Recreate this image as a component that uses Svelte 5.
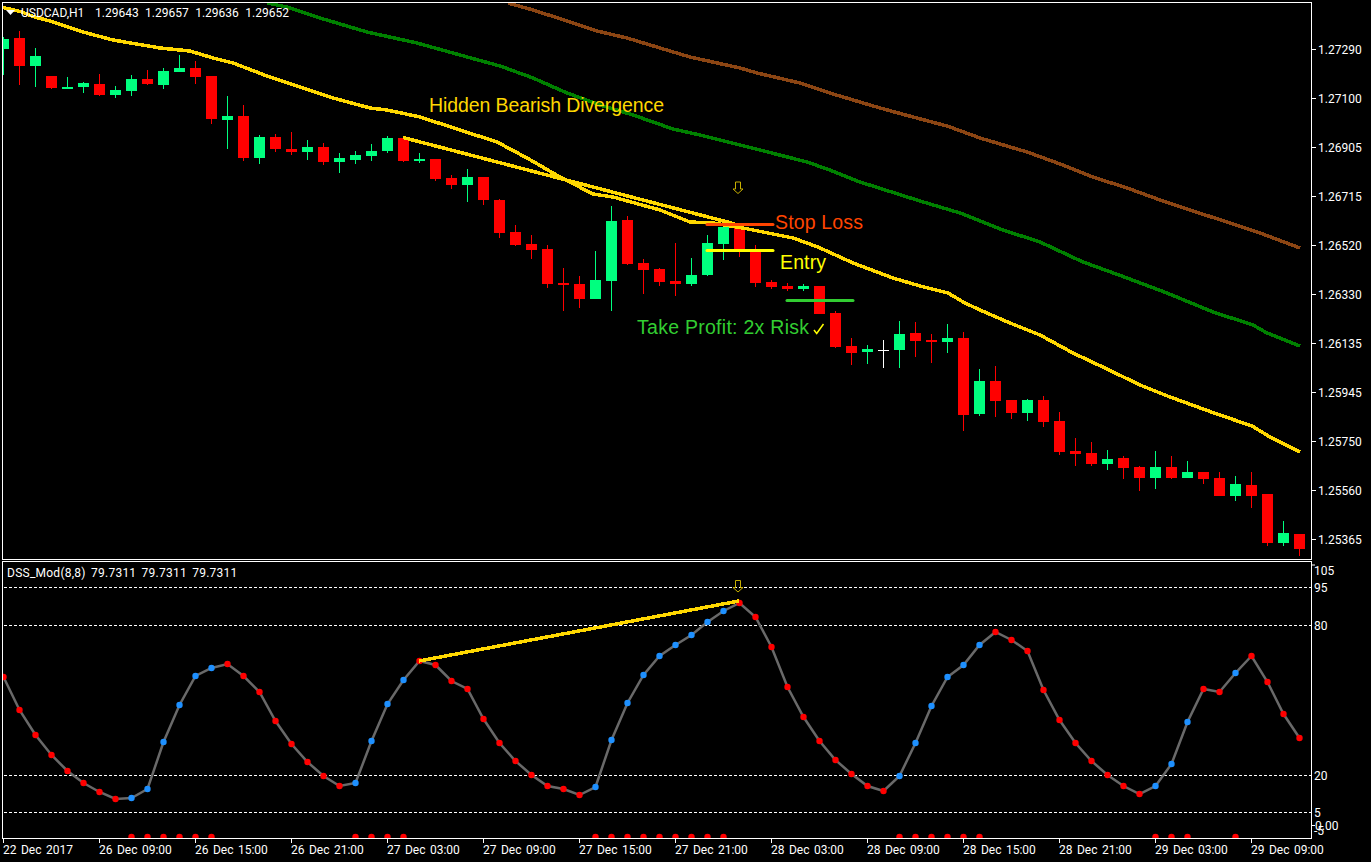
<script>
  // [type, high, bodyTop, bodyBottom, low] in screen y, one candle every 16px
  const candles = [
    ['g',37,39,49,75],['r',31,38,66,85],['g',48,56,66,87],['r',76,76,88,89],['g',77,87,89,89],['g',82,83,87,93],
    ['r',74,84,95,96],['g',86,90,95,98],['g',75,79,91,96],['r',70,79,84,85],['g',68,71,85,89],['g',55,68,72,72],
    ['r',61,68,77,84],['r',76,76,119,124],['g',96,116,120,149],['r',105,116,158,161],['g',135,137,158,164],['r',134,137,149,152],
    ['r',132,149,152,155],['g',140,147,152,160],['r',143,147,162,165],['g',153,158,162,173],['g',151,155,160,164],['g',144,151,156,161],
    ['g',136,138,151,153],['r',138,138,161,162],['g',153,159,161,163],['r',159,159,179,181],['r',175,178,185,189],['g',169,177,185,202],
    ['r',177,177,200,205],['r',199,200,233,238],['r',225,232,245,246],['r',235,244,250,259],['r',245,249,284,288],['r',268,283,285,311],
    ['r',276,284,299,308],['g',251,280,299,299],['g',206,221,281,311],['r',216,220,264,265],['r',259,263,270,294],['r',268,269,282,286],
    ['r',243,281,284,296],['g',258,275,284,286],['g',235,243,275,276],['g',226,227,244,260],['r',225,227,250,257],['r',245,250,283,287],
    ['r',280,282,287,289],['r',283,286,289,291],['g',284,286,289,291],['r',286,286,314,314],['r',311,313,347,348],['r',338,346,353,365],
    ['g',345,349,352,364],['w',340,350,351,368],['g',321,334,350,368],['r',322,333,341,357],['r',334,340,342,363],['g',324,338,342,353],
    ['r',332,338,415,431],['g',369,381,414,416],['r',366,381,401,417],['r',400,400,413,419],['g',399,400,413,421],['r',396,400,422,427],
    ['r',412,421,452,455],['r',438,451,454,466],['r',442,453,464,466],['g',450,459,464,470],['r',456,458,468,479],['r',466,467,478,491],
    ['g',451,467,478,489],['r',456,467,478,479],['g',461,472,478,478],['r',472,472,479,484],['r',472,478,496,496],['g',476,484,496,501],
    ['r',472,485,496,508],['r',494,494,543,546],['g',521,533,543,546],['r',534,534,549,556]
  ];
  const candleX = (i) => 3 + 16 * i;

  const gold = '3,7.5 22,12 33,16.5 50,21 83,32 113,40 160,48 190,51 213,58 233,63 267,76 300,87 333,98 370,108 387,110 420,117 460,130 497,142 527,158 560,177 593,194 613,197 660,210 690,222 713,223 743,228 793,238 818,247 853,263 893,278 920,286 948,293 965,303 980,310 1010,323 1040,335 1073,353 1107,369 1140,385 1170,397 1217,414 1252,426 1270,437 1300,452';
  const green = '267,3 287,7 320,18 367,32 417,43 460,55 500,66 533,78 567,93 600,105 633,115 673,129 700,135 760,150 807,162 827,169 860,182 920,201 960,213 1003,230 1040,242 1083,262 1127,278 1167,293 1213,312 1253,325 1267,333 1300,346';
  const brown = '508,3 533,10 567,21 597,31 627,38 660,48 690,57 740,68 757,73 800,83 833,94 880,108 913,117 947,126 980,138 1027,152 1060,164 1093,177 1130,189 1160,200 1193,211 1227,222 1260,233 1300,248';

  // DSS value per candle, r = falling, b = rising
  const dss = [
    ['r',677],['r',710],['r',735],['r',755],['r',771],['r',783],['r',792],['r',799],['b',798],['b',789],['b',742],['b',705],
    ['b',676],['b',668],['r',664],['r',676],['r',692],['r',721],['r',744],['r',762],['r',776],['r',786],['b',783],['b',741],
    ['b',704],['b',680],['r',661],['r',665],['r',681],['r',689],['r',719],['r',743],['r',761],['r',775],['r',786],['r',789],
    ['r',795],['b',787],['b',740],['b',703],['b',675],['b',656],['b',645],['b',635],['b',622],['b',611],['r',603],['r',617],
    ['r',647],['r',687],['r',717],['r',741],['r',760],['r',774],['r',786],['r',791],['b',776],['b',743],['b',706],['b',677],
    ['b',665],['b',645],['r',632],['r',640],['r',651],['r',690],['r',720],['r',743],['r',761],['r',775],['r',786],['r',794],
    ['b',786],['b',764],['b',722],['r',689],['r',692],['b',673],['r',656],['r',682],['r',714],['r',738]
  ];
  const dssLine = dss.map(([, y], i) => `${candleX(i) + 0.5},${y}`).join(' ');

  const prices = [
    ['1.27290',49],['1.27100',98],['1.26905',147],['1.26715',196],['1.26520',245],['1.26330',294],
    ['1.26135',343],['1.25945',392],['1.25750',441],['1.25560',490],['1.25365',539]
  ];
  const levels = [587.5, 625.5, 775.5, 812.5];
  const levelLabels = [['105',575],['95',592],['80',630],['20',780],['5',817],['0.00',830],['-5',835]];

  const times = ['22 Dec 2017','26 Dec 09:00','26 Dec 15:00','26 Dec 21:00','27 Dec 03:00','27 Dec 09:00','27 Dec 15:00',
    '27 Dec 21:00','28 Dec 03:00','28 Dec 09:00','28 Dec 15:00','28 Dec 21:00','29 Dec 03:00','29 Dec 09:00'];
</script>

<div class="terminal">
  <section class="pane">
    <svg width="1371" height="560" viewBox="0 0 1371 560">
      <defs>
        <clipPath id="plot"><rect x="3" y="3" width="1308" height="556" /></clipPath>
      </defs>
      <g clip-path="url(#plot)">
        <polyline class="ma" points={brown} stroke="#8b4513" />
        <polyline class="ma" points={green} stroke="#008000" />
        {#each candles as [kind, high, top, bottom, low], i}
          <g class={kind}>
            <rect x={candleX(i)} y={high} width="1" height={low - high} />
            <rect x={candleX(i) - 5} y={top} width="11" height={Math.max(bottom - top, 1)} />
          </g>
        {/each}
        <polyline class="ma" points={gold} stroke="#ffd700" />
        <line class="ma" x1="403" y1="137.5" x2="735" y2="224" stroke="#ffd700" />
        <line class="level-mark" x1="707" y1="224.5" x2="773" y2="224.5" stroke="#ff4500" />
        <line class="level-mark" x1="707" y1="250.5" x2="773" y2="250.5" stroke="#ffff00" />
        <line class="level-mark" x1="787" y1="300.5" x2="853" y2="300.5" stroke="#32cd32" />
      </g>

      <polygon class="arrow" points="735.5,182 740.5,182 740.5,189 743,189 738,193.5 733,189 735.5,189" />
      <path class="check" d="M814 330 L816.7 333.5 L823.5 324" />

      <text class="note" x="429" y="112" fill="#ffd700" textLength="235">Hidden Bearish Divergence</text>
      <text class="note" x="775" y="229" fill="#ff4500" textLength="88">Stop Loss</text>
      <text class="note" x="780" y="269" fill="#ffff00" textLength="46">Entry</text>
      <text class="note" x="637" y="334" fill="#32cd32" textLength="172">Take Profit: 2x Risk</text>

      <polygon class="flag" points="6,10 15,10 10.5,15" />
      <text class="tick" x="21" y="17">USDCAD,H1</text>
      <text class="tick legend" x="95" y="17">1.29643 1.29657 1.29636 1.29652</text>

      {#each prices as [label, y]}
        <line class="rule" x1="1312" y1={y + 0.5} x2="1316" y2={y + 0.5} />
        <text class="tick" x="1318" y={y + 4.5}>{label}</text>
      {/each}

      <rect class="frame" x="2.5" y="2.5" width="1309" height="557" />
    </svg>
  </section>

  <section class="pane">
    <svg width="1371" height="279" viewBox="0 560 1371 279">
      <defs>
        <clipPath id="sub"><rect x="3" y="562" width="1308" height="276" /></clipPath>
      </defs>
      {#each levels as y}
        <line class="dotted" x1="4" y1={y} x2="1311" y2={y} />
      {/each}
      <g clip-path="url(#sub)">
        <polyline class="dss-line" points={dssLine} />
        {#each dss as [kind, y], i}
          <circle class={kind === 'r' ? 'dot-r' : 'dot-b'} cx={candleX(i) + 0.5} cy={y} r="3.2" />
          {#if kind === 'b'}
            <circle class="dot-r" cx={candleX(i) + 0.5} cy="837" r="3.2" />
          {/if}
        {/each}
        <line class="ma" x1="419" y1="661" x2="739" y2="601" stroke="#ffd700" />
      </g>
      <polygon class="arrow" points="735.5,580.5 740.5,580.5 740.5,587.5 743,587.5 738,592 733,587.5 735.5,587.5" />
      <text class="tick dss-label" x="7" y="577">DSS_Mod(8,8) 79.7311 79.7311 79.7311</text>

      <line class="rule" x1="1312" y1="565" x2="1315" y2="565" />
      <line class="rule" x1="1312" y1="825.5" x2="1315" y2="825.5" />
      {#each levelLabels as [label, y]}
        <text class="tick" x={label === '0.00' ? 1315 : 1314} y={y}>{label}</text>
      {/each}

      <rect class="frame" x="2.5" y="561.5" width="1309" height="277" />
    </svg>
  </section>

  <div class="time-axis">
    {#each times as label}
      <span class="time">{label}</span>
    {/each}
  </div>
</div>

<style>
  :global(body) {
    background: #000;
  }
  .terminal {
    width: 1371px;
    height: 862px;
    background: #000;
    overflow: hidden;
  }
  .pane svg {
    display: block;
  }
  .g { fill: #00ff7f; }
  .r { fill: #ff0000; }
  .w { fill: #ffffff; }
  .ma {
    fill: none;
    stroke-width: 3.5;
    stroke-linejoin: round;
    shape-rendering: crispEdges;
  }
  .level-mark {
    stroke-width: 3;
    stroke-linecap: round;
  }
  .frame {
    fill: none;
    stroke: #fff;
    stroke-width: 1;
  }
  .rule {
    stroke: #fff;
    stroke-width: 1;
  }
  .dotted {
    stroke: #fff;
    stroke-width: 1;
    stroke-dasharray: 3 2;
  }
  .dss-line {
    fill: none;
    stroke: #696969;
    stroke-width: 2.5;
  }
  .dot-r { fill: #ff0000; }
  .dot-b { fill: #1e90ff; }
  .arrow {
    fill: none;
    stroke: #c8b000;
    stroke-width: 1;
  }
  .check {
    fill: none;
    stroke: #ffff00;
    stroke-width: 1.5;
  }
  .flag { fill: #fff; }
  .note {
    font-family: "Liberation Sans", Arial, sans-serif;
    font-size: 19.5px;
  }
  .tick {
    font-family: Roboto, "Liberation Sans", sans-serif;
    font-size: 12px;
    fill: #fff;
  }
  .legend {
    word-spacing: 3.5px;
  }
  .dss-label {
    letter-spacing: 0.25px;
    word-spacing: 2px;
  }
  .time-axis {
    display: grid;
    grid-template-columns: repeat(14, 96px);
    padding-left: 3px;
  }
  .time {
    position: relative;
    padding-top: 4px;
    font: 12px Roboto, "Liberation Sans", sans-serif;
    word-spacing: 1.5px;
    color: #fff;
    white-space: nowrap;
  }
  .time::before {
    content: "";
    position: absolute;
    left: 0;
    top: 0;
    width: 1px;
    height: 4px;
    background: #fff;
  }
</style>
